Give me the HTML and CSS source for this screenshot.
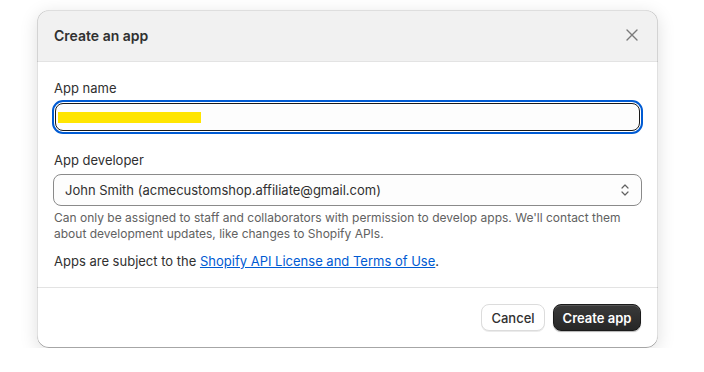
FILE: index.html
```html
<!DOCTYPE html>
<html lang="en">
<head>
    <meta charset="UTF-8">
    <meta name="viewport" content="width=device-width, initial-scale=1.0">
    <title>Create an app</title>
    <link rel="stylesheet" href="styles.css">
</head>
<body>

<div class="modal">
    <div class="modal-header">
        <h2>Create an app</h2>
        <button class="close-btn" aria-label="Close">
            <svg width="12" height="12" viewBox="0 0 12 12">
                <path d="M1 1L11 11M11 1L1 11" stroke="#7a7a7a" stroke-width="1.4" stroke-linecap="round"/>
            </svg>
        </button>
    </div>

    <div class="modal-body">
        <label class="field-label" for="app-name">App name</label>
        <div class="text-input">
            <span class="redacted"></span>
        </div>

        <label class="field-label dev-label" for="app-dev">App developer</label>
        <div class="select">
            <span>John Smith (acmecustomshop.affiliate@gmail.com)</span>
            <svg width="12" height="14" viewBox="0 0 12 14">
                <path d="M3 5L6 2L9 5M3 9L6 12L9 9" fill="none" stroke="#616161" stroke-width="1.2" stroke-linecap="round" stroke-linejoin="round"/>
            </svg>
        </div>
        <p class="help-text">Can only be assigned to staff and collaborators with permission to develop apps. We'll contact them about development updates, like changes to Shopify APIs.</p>
        <p class="terms">Apps are subject to the <a href="#">Shopify API License and Terms of Use</a>.</p>
    </div>

    <div class="modal-footer">
        <button class="btn btn-secondary">Cancel</button>
        <button class="btn btn-primary">Create app</button>
    </div>
</div>

</body>
</html>
```

FILE: styles.css
```css
body {
    margin: 0;
    padding: 10px 0 0 37px;
    background-color: #ffffff;
    font-family: Inter, "Noto Sans", Arial, sans-serif;
    color: #303030;
}
.modal {
    position: relative;
    width: 621px;
    background-color: white;
    border-radius: 12px;
    overflow: hidden;
    box-shadow: 0 4px 18px rgba(0, 0, 0, 0.13);
}
.modal::after {
    content: "";
    position: absolute;
    inset: 0;
    border-radius: 12px;
    pointer-events: none;
    box-shadow: inset 0 -1px 0 rgba(0, 0, 0, 0.35), inset 1px 0 0 rgba(0, 0, 0, 0.12), inset -1px 0 0 rgba(0, 0, 0, 0.12), inset 0 1px 0 rgba(0, 0, 0, 0.08);
}
.modal-header {
    display: flex;
    align-items: center;
    justify-content: space-between;
    height: 50px;
    padding: 0 20px 1px 17px;
    background-color: #f1f1f1;
    border-bottom: 1px solid #e3e3e3;
}
.modal-header h2 {
    margin: 0;
    font-size: 14px;
    font-weight: 600;
    color: #303030;
}
.close-btn {
    display: flex;
    padding: 0;
    border: none;
    background: none;
    cursor: pointer;
}
.modal-body {
    padding: 16px 16px 16px 16px;
    border-bottom: 1px solid #e3e3e3;
}
.field-label {
    display: block;
    font-size: 13px;
    line-height: 20px;
    margin-left: 1px;
}
.dev-label {
    margin-top: 19px;
}
.text-input {
    display: flex;
    align-items: center;
    height: 26px;
    margin: 5px 2px 0 2px;
    padding: 0 2px;
    border: 1px solid #1a1a1a;
    border-radius: 8px;
    outline: 2px solid #005bd3;
    outline-offset: 1px;
    background-color: #fdfdfd;
}
.redacted {
    display: block;
    width: 143px;
    height: 11px;
    background-color: #ffe500;
}
.select {
    display: flex;
    align-items: center;
    justify-content: space-between;
    height: 30px;
    margin-top: 4px;
    padding: 0 10px 0 11px;
    border: 1px solid #8a8a8a;
    border-radius: 8px;
    background-color: #fdfdfd;
    font-size: 13px;
}
.help-text {
    margin: 4px 0 0 1px;
    font-size: 12px;
    line-height: 16px;
    color: #616161;
}
.terms {
    margin: 9px 0 0 1px;
    font-size: 13px;
    line-height: 20px;
}
.terms a {
    color: #005bd3;
}
.modal-footer {
    display: flex;
    justify-content: flex-end;
    gap: 8px;
    padding: 16px 17px 17px 16px;
}
.btn {
    height: 27px;
    padding: 0;
    border-radius: 8px;
    font-family: inherit;
    font-size: 13px;
    white-space: nowrap;
    cursor: pointer;
}
.btn-secondary {
    width: 64px;
    background-color: white;
    color: #303030;
    font-weight: 500;
    border: 1px solid #dcdcdc;
    box-shadow: 0 1px 0 rgba(0, 0, 0, 0.08);
}
.btn-primary {
    width: 88px;
    background: linear-gradient(#3a3a3a, #262626);
    color: white;
    font-weight: 600;
    border: 1px solid #1a1a1a;
    box-shadow: inset 0 1px 0 rgba(255, 255, 255, 0.15), 0 1px 1px rgba(0, 0, 0, 0.3);
}
```
